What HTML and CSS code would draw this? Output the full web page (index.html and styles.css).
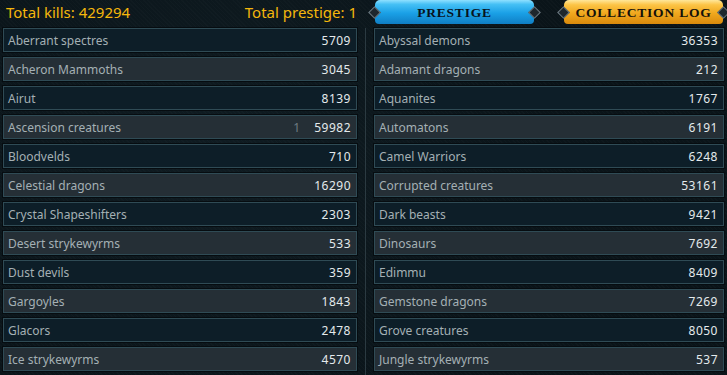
FILE: index.html
```html
<!DOCTYPE html>
<html lang="en">
<head>
    <meta charset="UTF-8">
    <meta name="viewport" content="width=device-width, initial-scale=1.0">
    <title>Slayer Kills</title>
    <link rel="stylesheet" href="styles.css">
</head>
<body>

    <div class="page">
        <div class="totals">
            <span>Total kills: 429294</span>
            <span>Total prestige: 1</span>
        </div>
        <div class="spacer"></div>
        <div class="tabs">
            <button class="tab tab-blue">Prestige</button>
            <button class="tab tab-gold">Collection Log</button>
        </div>

        <div class="list">
            <div class="row"><span class="name">Aberrant spectres</span><span class="count">5709</span></div>
            <div class="row"><span class="name">Acheron Mammoths</span><span class="count">3045</span></div>
            <div class="row"><span class="name">Airut</span><span class="count">8139</span></div>
            <div class="row"><span class="name">Ascension creatures</span><span class="prestige">1</span><span class="count">59982</span></div>
            <div class="row"><span class="name">Bloodvelds</span><span class="count">710</span></div>
            <div class="row"><span class="name">Celestial dragons</span><span class="count">16290</span></div>
            <div class="row"><span class="name">Crystal Shapeshifters</span><span class="count">2303</span></div>
            <div class="row"><span class="name">Desert strykewyrms</span><span class="count">533</span></div>
            <div class="row"><span class="name">Dust devils</span><span class="count">359</span></div>
            <div class="row"><span class="name">Gargoyles</span><span class="count">1843</span></div>
            <div class="row"><span class="name">Glacors</span><span class="count">2478</span></div>
            <div class="row"><span class="name">Ice strykewyrms</span><span class="count">4570</span></div>
        </div>
        <div class="divider"></div>
        <div class="list">
            <div class="row"><span class="name">Abyssal demons</span><span class="count">36353</span></div>
            <div class="row"><span class="name">Adamant dragons</span><span class="count">212</span></div>
            <div class="row"><span class="name">Aquanites</span><span class="count">1767</span></div>
            <div class="row"><span class="name">Automatons</span><span class="count">6191</span></div>
            <div class="row"><span class="name">Camel Warriors</span><span class="count">6248</span></div>
            <div class="row"><span class="name">Corrupted creatures</span><span class="count">53161</span></div>
            <div class="row"><span class="name">Dark beasts</span><span class="count">9421</span></div>
            <div class="row"><span class="name">Dinosaurs</span><span class="count">7692</span></div>
            <div class="row"><span class="name">Edimmu</span><span class="count">8409</span></div>
            <div class="row"><span class="name">Gemstone dragons</span><span class="count">7269</span></div>
            <div class="row"><span class="name">Grove creatures</span><span class="count">8050</span></div>
            <div class="row"><span class="name">Jungle strykewyrms</span><span class="count">537</span></div>
        </div>
    </div>

</body>
</html>
```

FILE: styles.css
```css
body {
    margin: 0;
    background: #0a1419;
    font-family: 'Noto Sans', 'DejaVu Sans', sans-serif;
    overflow: hidden;
}
.page {
    width: 727px;
    height: 375px;
    display: grid;
    grid-template-columns: 354px 17px 350px;
    grid-template-rows: 28px 1fr;
    padding-left: 3px;
    box-sizing: border-box;
    background:
        radial-gradient(circle at 30% 40%, rgba(30, 50, 60, 0.25), transparent 60%),
        repeating-linear-gradient(45deg, rgba(255, 255, 255, 0.015) 0 1px, transparent 1px 3px),
        #0a1419;
}
.totals {
    display: flex;
    justify-content: space-between;
    align-items: center;
    padding: 0 0 4px 3px;
    color: #f5b70c;
    font-size: 15px;
}
.tabs {
    display: flex;
    gap: 30px;
    padding-left: 1px;
}
.tab {
    position: relative;
    width: 159px;
    height: 24px;
    border: none;
    border-radius: 5px 5px 4px 4px;
    font-family: 'Liberation Serif', serif;
    font-weight: bold;
    font-size: 13.5px;
    letter-spacing: 0.8px;
    text-transform: uppercase;
    color: #15110a;
    padding: 0;
    padding-top: 1px;
}
.tab-blue {
    background: linear-gradient(to bottom, #8fe0ff 0, #45c0f5 18%, #1aa0e6 55%, #0f7ec4 100%);
    color: #08131c;
}
.tab-gold {
    background: linear-gradient(to bottom, #ffe79a 0, #fcc446 20%, #f0a81e 55%, #d98a0c 100%);
}
.tab::before, .tab::after {
    content: '';
    position: absolute;
    top: 8px;
    width: 7px;
    height: 7px;
    background: #1e272d;
    border: 1px solid #6c7a82;
    transform: rotate(45deg);
}
.tab::before {
    left: -5px;
}
.tab::after {
    right: -5px;
}
.list {
    display: flex;
    flex-direction: column;
    gap: 5px;
}
.row {
    display: flex;
    align-items: center;
    height: 24px;
    box-sizing: border-box;
    padding: 0 5px 0 4px;
    border: 1px solid #2f4b55;
    box-shadow: 0 0 0 1px #060c10;
    background: #0d1e28;
    font-size: 12px;
}
.row:nth-child(even) {
    background: #252f36;
}
.name {
    flex: 1;
    color: #a4b0b4;
}
.prestige {
    color: #6f7c82;
    margin-right: 14px;
}
.count {
    color: #e4eaec;
    letter-spacing: 0.5px;
}
.divider {
    justify-self: center;
    width: 1px;
    margin-right: 1px;
    background: #2b3a41;
}
```
